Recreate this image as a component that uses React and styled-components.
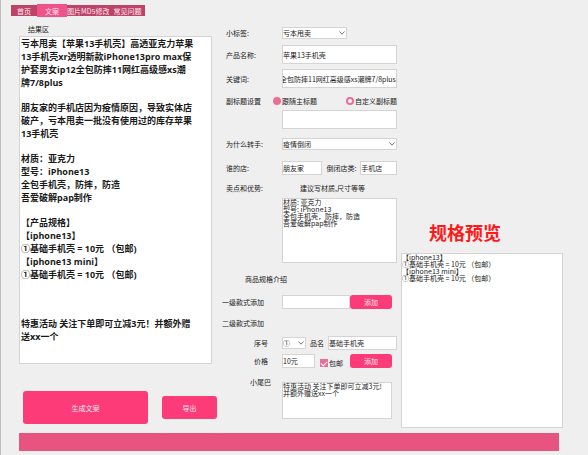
import { useEffect, useRef, useState } from 'react'
import styled, { createGlobalStyle } from 'styled-components';

const TABS = ["首页", "文案", "图片MD5修改", "常见问题"]

const RESULT = [
    ["亏本甩卖【苹果13手机壳】高透亚克力苹果", "13手机壳xr透明新款iPhone13pro max保", "护套男女ip12全包防摔11网红高级感xs潮", "牌7/8plus"],
    ["朋友家的手机店因为疫情原因，导致实体店", "破产，亏本甩卖一批没有使用过的库存苹果", "13手机壳"],
    ["材质：亚克力", "型号：iPhone13", "全包手机壳，防摔，防造", "吾爱破解pap制作"],
    ["【产品规格】", "【iphone13】", "①基础手机壳 = 10元 （包邮)", "【iphone13 mini】", "①基础手机壳 = 10元 （包邮)"],
    ["特惠活动 关注下单即可立减3元！并额外赠", "送xx一个"],
]

const PREVIEW = "【iphone13】\n①基础手机壳 = 10元 （包邮）\n【iphone13 mini】\n①基础手机壳 = 10元 （包邮）"
const SELLING = "材质: 亚克力\n型号: iPhone13\n全包手机壳，防摔，防造\n吾爱破解pap制作"
const TAIL = "特惠活动 关注下单即可立减3元!\n并额外赠送xx一个"

function Dropdown({ id, options, width, label }) {
    return (
        <SelectWrapper $width={width}>
            <Select id={id} aria-label={label}>
                {options.map((option) => <option key={option}>{option}</option>)}
            </Select>
            <Chevron viewBox="0 0 8 8" aria-hidden="true"><path d="M1.5 2.5 4 5.2 6.5 2.5" /></Chevron>
        </SelectWrapper>
    )
}

function Result() {
    return (
        <ResultBox aria-labelledby="result-title">
            {RESULT.map((lines, index) => (
                <Paragraph key={index}>
                    {lines.map((line, i) => <Line key={i}>{line}</Line>)}
                </Paragraph>
            ))}
        </ResultBox>
    )
}

export default function App() {
    const [tab, setTab] = useState(1)
    const [custom, setCustom] = useState(true)
    const keywords = useRef(null)

    // keep the end of the keywords in view
    useEffect(() => {
        keywords.current.scrollLeft = keywords.current.scrollWidth
    }, [])

    return (
        <Window>
            <GlobalStyle />
            <Tabs>
                {TABS.map((name, index) => (
                    <Tab key={name} $active={tab === index} onClick={() => setTab(index)}>{name}</Tab>
                ))}
            </Tabs>
            <Columns>
                <ResultColumn>
                    <ResultTitle id="result-title">结果区</ResultTitle>
                    <Result />
                    <Actions>
                        <Button $grow={125} $height={33}>生成文案</Button>
                        <Button $grow={55} $height={23}>导出</Button>
                    </Actions>
                </ResultColumn>

                <Form onSubmit={(e) => e.preventDefault()}>
                    <Row $top={10} $height={12}>
                        <Label htmlFor="tag">小标签:</Label>
                        <Dropdown id="tag" options={["亏本甩卖"]} width={65} />
                    </Row>
                    <Row $top={6} $height={19}>
                        <Label htmlFor="name">产品名称:</Label>
                        <Input id="name" defaultValue="苹果13手机壳" />
                    </Row>
                    <Row $top={5} $height={19}>
                        <Label htmlFor="keywords">关键词:</Label>
                        <Input id="keywords" ref={keywords} defaultValue="全包防摔11网红高级感xs潮牌7/8plus" />
                    </Row>
                    <Row $top={5} $height={16}>
                        <Label as="span" $width={52}>副标题设置</Label>
                        <RadioGroup>
                            <Choice>
                                <Radio name="subtitle" checked={!custom} onChange={() => setCustom(false)} />
                                跟随主标题
                            </Choice>
                            <Choice>
                                <Radio name="subtitle" checked={custom} onChange={() => setCustom(true)} />
                                自定义副标题
                            </Choice>
                        </RadioGroup>
                    </Row>
                    <Row $top={1} $height={19}>
                        <Label as="span" />
                        <TextArea aria-label="自定义副标题" />
                    </Row>
                    <Row $top={9} $height={12}>
                        <Label htmlFor="reason">为什么转手:</Label>
                        <Dropdown id="reason" options={["疫情倒闭"]} />
                    </Row>
                    <Row $top={11} $height={14}>
                        <Label htmlFor="owner">谁的店:</Label>
                        <Input id="owner" $grow={41} defaultValue="朋友家" />
                        <InnerLabel htmlFor="kind">倒闭店类:</InnerLabel>
                        <Input id="kind" $grow={37} defaultValue="手机店" />
                    </Row>
                    <Row $top={8} $height={10}>
                        <Label htmlFor="selling">卖点和优势:</Label>
                        <Hint>建议写材质,尺寸等等</Hint>
                    </Row>
                    <Row $top={5} $height={65}>
                        <Label as="span" />
                        <TextArea id="selling" defaultValue={SELLING} />
                    </Row>
                    <Row $top={11} $height={10}>
                        <Label as="h2" $indent={24}>商品规格介绍</Label>
                    </Row>
                    <Row $top={11} $height={14} $end={5}>
                        <Label htmlFor="style" $indent={1}>一级款式添加</Label>
                        <Input id="style" />
                        <Button $width={42} $height={14}>添加</Button>
                    </Row>
                    <Row $top={9} $height={10}>
                        <Label as="h3" $indent={1}>二级款式添加</Label>
                    </Row>
                    <Row $top={8} $height={14}>
                        <Label htmlFor="serial" $indent={33}>序号</Label>
                        <Dropdown id="serial" options={["①"]} width={24} />
                        <InnerLabel htmlFor="item">品名</InnerLabel>
                        <Input id="item" defaultValue="基础手机壳" />
                    </Row>
                    <Row $top={4} $height={14} $end={5}>
                        <Label htmlFor="price" $indent={33}>价格</Label>
                        <Input id="price" $width={33} defaultValue="10元" />
                        <PostChoice>
                            <Checkbox defaultChecked />
                            包邮
                        </PostChoice>
                        <Button $width={42} $height={14}>添加</Button>
                    </Row>
                    <Row $top={9} $height={42} $end={5} $align="flex-end">
                        <TailLabel htmlFor="tail" $indent={29}>小尾巴</TailLabel>
                        <TextArea id="tail" $height={37} defaultValue={TAIL} />
                    </Row>
                </Form>

                <PreviewColumn>
                    <PreviewTitle>规格预览</PreviewTitle>
                    <PreviewBox aria-label="规格预览" defaultValue={PREVIEW} />
                </PreviewColumn>
            </Columns>
            <StatusBar />
        </Window>
    )
}

const GlobalStyle = createGlobalStyle`
    * {
        box-sizing: border-box;
    }

    body {
        margin: 0;
        background-color: #EFEFEF;
    }

    body, button, input, select, textarea {
        font-family: "Noto Sans CJK SC", sans-serif;
        font-size: 7px;
        line-height: 10px;
        color: #1A1A1A;
    }
`

const Window = styled.div`
    display: flex;
    flex-direction: column;
    min-height: 100vh;
    padding: 4px 25px 4px 18px;
    border-left: 1px solid #BDBDBD;
`

const Tabs = styled.nav`
    display: flex;
    align-items: center;
    align-self: flex-start;
    height: 13px;
    margin-left: -8px;
`

const Tab = styled.button`
    height: ${({ $active }) => $active ? 13 : 11}px;
    padding: 0 ${({ $active }) => $active ? 8 : 0}px;
    border: none;
    background-color: ${({ $active }) => $active ? "#F0528A" : "#BB4468"};
    color: #FFE6EE;
    white-space: nowrap;

    &:first-child {
        padding: 0 6px;
    }

    &:last-child {
        padding: 0 4px;
    }
`

const Columns = styled.main`
    display: grid;
    grid-template-columns: minmax(0, 198fr) minmax(0, 184fr) minmax(0, 162fr);
    flex: 1;
`

const ResultColumn = styled.section`
    display: flex;
    flex-direction: column;
    padding-top: 7px;
`

const ResultTitle = styled.h2`
    margin: 0 0 2px 9px;
    font-size: 7px;
    font-weight: 400;
    line-height: 10px;
`

const ResultBox = styled.output`
    display: flex;
    flex-direction: column;
    gap: 12px;
    height: 328px;
    margin-right: 5px;
    padding: 0 1px;
    border: 1px solid #D4D4D4;
    background-color: #FFFFFF;
    font-family: "Open Sans", "Noto Sans CJK SC", sans-serif;
    font-size: 9px;
    font-weight: 700;
    line-height: 13px;
    overflow: hidden;
`

const Paragraph = styled.p`
    margin: 0;

    &:last-child {
        margin-top: 24px;
    }
`

const Line = styled.span`
    display: block;
    height: 13px;
    white-space: nowrap;
`

const Actions = styled.div`
    display: flex;
    align-items: center;
    gap: 14px;
    margin-top: 27px;
    padding-left: 4px;
`

const Button = styled.button`
    flex: ${({ $width, $grow }) => $width ? `0 0 ${$width}px` : `${$grow} 1 0`};
    height: ${({ $height }) => $height}px;
    padding: 0;
    border: none;
    border-radius: 3px;
    background-color: #FC3B78;
    color: #FFE6EE;
`

const Form = styled.form`
    display: flex;
    flex-direction: column;
    padding: 0 4px;
`

const Row = styled.div`
    display: flex;
    align-items: ${({ $align }) => $align || "center"};
    height: ${({ $height }) => $height}px;
    margin-top: ${({ $top }) => $top}px;
    padding-right: ${({ $end }) => $end || 0}px;
`

const Label = styled.label`
    flex: 0 0 ${({ $width }) => $width || 61}px;
    margin: 0;
    padding-left: ${({ $indent }) => $indent || 5}px;
    font-size: 7px;
    font-weight: 400;
    line-height: 10px;
    white-space: nowrap;
`

const TailLabel = styled(Label)`
    align-self: flex-start;
`

const InnerLabel = styled.label`
    padding: 0 4px;
    white-space: nowrap;
`

const Hint = styled.span`
    padding-left: 18px;
    white-space: nowrap;
`

const Input = styled.input`
    flex: ${({ $width, $grow }) => $width ? `0 0 ${$width}px` : `${$grow || 1} 1 0`};
    align-self: stretch;
    min-width: 0;
    padding: 0;
    border: 1px solid #D4D4D4;
    background-color: #FFFFFF;
    outline: none;
`

const TextArea = styled.textarea`
    flex: 1;
    min-width: 0;
    height: ${({ $height }) => $height ? `${$height}px` : "100%"};
    padding: 0;
    border: 1px solid #D4D4D4;
    background-color: #FFFFFF;
    line-height: 7px;
    white-space: pre;
    outline: none;
    overflow: hidden;
    resize: none;
`

const SelectWrapper = styled.div`
    position: relative;
    display: flex;
    flex: ${({ $width }) => $width ? `0 0 ${$width}px` : 1};
    height: 12px;
`

const Select = styled.select`
    width: 100%;
    padding: 0;
    border: 1px solid #D4D4D4;
    border-radius: 0;
    background-color: #FFFFFF;
    appearance: none;
    outline: none;
`

const Chevron = styled.svg`
    position: absolute;
    top: 2px;
    right: 1px;
    width: 8px;
    height: 8px;
    fill: none;
    stroke: #777777;
    pointer-events: none;
`

const RadioGroup = styled.div`
    display: flex;
    flex: 1;
    justify-content: space-between;
`

const Choice = styled.label`
    display: flex;
    align-items: center;
    gap: 1px;
    white-space: nowrap;
`

const Radio = styled.input.attrs({ type: "radio" })`
    width: 8px;
    height: 8px;
    margin: 0;
    border: ${({ checked }) => checked ? 2 : 4}px solid #EE6C98;
    border-radius: 50%;
    background-color: #FFFFFF;
    appearance: none;
`

const PostChoice = styled(Choice)`
    flex: 1;
    padding: 4px 0 0 5px;
`

const Checkbox = styled.input.attrs({ type: "checkbox" })`
    display: grid;
    width: 8px;
    height: 8px;
    margin: 0;
    background-color: #EE6C98;
    appearance: none;

    &:checked::before {
        content: "";
        width: 5px;
        height: 3px;
        margin: 2px 0 0 1px;
        border: solid #FFFFFF;
        border-width: 0 0 1px 1px;
        transform: rotate(-45deg);
    }
`

const PreviewColumn = styled.section`
    display: flex;
    flex-direction: column;
    padding-top: 203px;
`

const PreviewTitle = styled.h1`
    margin: 0 0 8px 28px;
    color: #FF1A1A;
    font-size: 18px;
    font-weight: 700;
    line-height: 25px;
    white-space: nowrap;
`

const PreviewBox = styled(TextArea)`
    flex: none;
    width: 100%;
    height: 175px;
`

const StatusBar = styled.footer`
    height: 18px;
    margin-right: 4px;
    background-color: #E75480;
`
